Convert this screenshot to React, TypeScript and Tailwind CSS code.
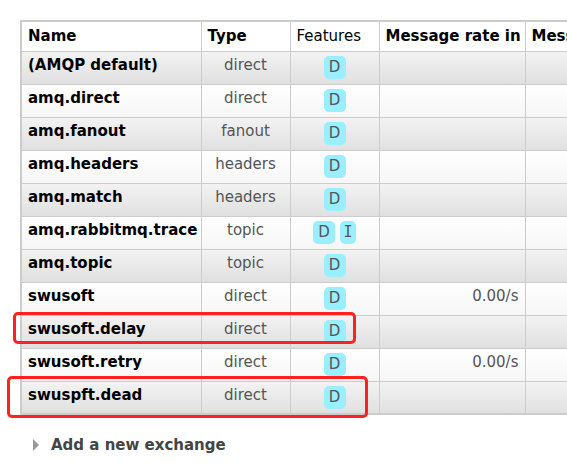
import React from 'react';

type Exchange = {
  name: string;
  type: string;
  features: string[];
  rateIn?: string;
};

const exchanges: Exchange[] = [
  { name: '(AMQP default)', type: 'direct', features: ['D'] },
  { name: 'amq.direct', type: 'direct', features: ['D'] },
  { name: 'amq.fanout', type: 'fanout', features: ['D'] },
  { name: 'amq.headers', type: 'headers', features: ['D'] },
  { name: 'amq.match', type: 'headers', features: ['D'] },
  { name: 'amq.rabbitmq.trace', type: 'topic', features: ['D', 'I'] },
  { name: 'amq.topic', type: 'topic', features: ['D'] },
  { name: 'swusoft', type: 'direct', features: ['D'], rateIn: '0.00/s' },
  { name: 'swusoft.delay', type: 'direct', features: ['D'] },
  { name: 'swusoft.retry', type: 'direct', features: ['D'], rateIn: '0.00/s' },
  { name: 'swuspft.dead', type: 'direct', features: ['D'] },
];

const Badge: React.FC<{ label: string }> = ({ label }) => (
  <span
    className={
      label === 'I'
        ? 'inline-flex h-[23px] w-[16px] items-center justify-center rounded-[5px] bg-[#99eeff] font-mono text-[#555]'
        : 'inline-flex h-[23px] w-[22px] items-center justify-center rounded-[5px] bg-[#99eeff] text-[#555]'
    }
    style={label === 'I' ? { fontFamily: '"DejaVu Sans Mono", monospace' } : undefined}
  >
    {label}
  </span>
);

export default function App() {
  return (
    <div
      className="relative h-[470px] w-[567px] overflow-hidden bg-white text-[15px]"
      style={{ fontFamily: '"DejaVu Sans", Verdana, sans-serif' }}
    >
      <div className="pl-[20px] pt-[20px]">
        <table className="w-[640px] table-fixed border-collapse border-2 border-[#cccccc]">
          <colgroup>
            <col className="w-[180px]" />
            <col className="w-[89px]" />
            <col className="w-[89px]" />
            <col className="w-[146px]" />
            <col />
          </colgroup>
          <thead>
            <tr className="h-[30px] bg-white text-left text-black">
              <th className="border border-[#cccccc] px-[6px] font-bold">Name</th>
              <th className="border border-[#cccccc] px-[6px] font-bold">Type</th>
              <th className="border border-[#cccccc] px-[6px] font-normal">Features</th>
              <th className="border border-[#cccccc] px-[6px] font-bold whitespace-nowrap">Message rate in</th>
              <th className="border border-[#cccccc] px-[6px] font-bold whitespace-nowrap">Message rate out</th>
            </tr>
          </thead>
          <tbody>
            {exchanges.map((ex, i) => (
              <tr
                key={ex.name}
                className={
                  i % 2 === 0
                    ? 'h-[33px] bg-gradient-to-b from-[#f3f3f3] to-[#e0e0e0]'
                    : 'h-[33px] bg-gradient-to-b from-white to-[#f6f6f6]'
                }
              >
                <td className="border border-[#cccccc] px-[6px] pb-[4px] font-bold text-black whitespace-nowrap">
                  {ex.name}
                </td>
                <td className="border border-[#cccccc] px-[6px] pb-[4px] text-center text-[#555]">{ex.type}</td>
                <td className="border border-[#cccccc] px-[6px] text-center">
                  <div className="flex justify-center gap-[5px]">
                    {ex.features.map((f) => (
                      <Badge key={f} label={f} />
                    ))}
                  </div>
                </td>
                <td className="border border-[#cccccc] px-[6px] pb-[4px] text-right text-[#555]">{ex.rateIn ?? ''}</td>
                <td className="border border-[#cccccc] px-[6px]"></td>
              </tr>
            ))}
          </tbody>
        </table>

        <div className="mt-[19px] flex items-center gap-[12px] pl-[13px] font-bold text-[#444]">
          <span className="h-0 w-0 border-y-[6px] border-l-[6px] border-y-transparent border-l-[#999]" />
          <span>Add a new exchange</span>
        </div>
      </div>

      {/* annotation boxes */}
      <div className="pointer-events-none absolute left-[13px] top-[312px] h-[32px] w-[343px] rounded-[5px] border-[3px] border-[#ff2020]" />
      <div className="pointer-events-none absolute left-[7px] top-[376px] h-[42px] w-[361px] rounded-[5px] border-[3px] border-[#ff2020]" />
    </div>
  );
}
